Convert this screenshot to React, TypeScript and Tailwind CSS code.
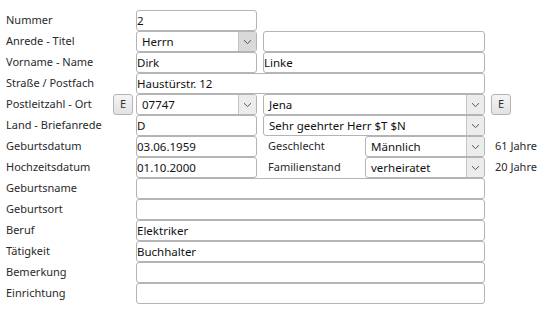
import React from 'react';

const font = { fontFamily: '"Noto Sans", "Open Sans", sans-serif' };

interface FieldProps {
  width: string;
  value?: string;
  select?: boolean;
  dark?: boolean;
}

const Chevron = () => (
  <svg width="9" height="6" viewBox="0 0 9 6" fill="none">
    <path d="M1 1.2 L4.5 4.6 L8 1.2" stroke="#555" strokeWidth="1" />
  </svg>
);

const Field: React.FC<FieldProps> = ({ width, value = '', select, dark }) => (
  <div
    className={`${width} h-[21px] flex items-stretch border border-[#b4b4b4] rounded-[3px] bg-white overflow-hidden`}
  >
    <span
      className={`flex-1 flex items-center text-[11.5px] text-[#111] whitespace-nowrap ${
        select ? 'pl-[5px] pt-[1px]' : 'pl-[0px]'
      }`}
    >
      {value}
    </span>
    {select && (
      <span
        className={`w-[18px] flex items-center justify-center border-l border-[#c4c4c4] ${
          dark ? 'bg-[#d9d9d9]' : 'bg-[#ececec]'
        }`}
      >
        <Chevron />
      </span>
    )}
  </div>
);

const EButton = () => (
  <div className="w-[20px] h-[21px] flex items-center justify-center border border-[#b4b4b4] rounded-[3px] bg-gradient-to-b from-[#f4f4f4] to-[#e2e2e2] text-[11px] text-[#333]">
    E
  </div>
);

const Row: React.FC<{ label: string; extra?: React.ReactNode; children: React.ReactNode }> = ({
  label,
  extra,
  children,
}) => (
  <div className="flex h-[21px] items-stretch">
    <div className="w-[136px] flex items-center justify-between pl-[6px] pr-[3px] text-[11px] text-[#2a2a2a]">
      <span>{label}</span>
      {extra}
    </div>
    <div className="flex items-stretch">{children}</div>
  </div>
);

export default function App() {
  return (
    <div className="w-[540px] h-[311px] bg-white pt-[10px]" style={font}>
      <Row label="Nummer">
        <Field width="w-[121px]" value="2" />
      </Row>
      <Row label="Anrede - Titel">
        <Field width="w-[121px]" value="Herrn" select dark />
        <div className="w-[6px]" />
        <Field width="w-[222px]" />
      </Row>
      <Row label="Vorname - Name">
        <Field width="w-[121px]" value="Dirk" />
        <div className="w-[6px]" />
        <Field width="w-[222px]" value="Linke" />
      </Row>
      <Row label="Straße / Postfach">
        <Field width="w-[349px]" value="Haustürstr. 12" />
      </Row>
      <Row label="Postleitzahl - Ort" extra={<EButton />}>
        <Field width="w-[121px]" value="07747" select />
        <div className="w-[6px]" />
        <Field width="w-[222px]" value="Jena" select />
        <div className="w-[6px]" />
        <EButton />
      </Row>
      <Row label="Land - Briefanrede">
        <Field width="w-[121px]" value="D" />
        <div className="w-[6px]" />
        <Field width="w-[222px]" value="Sehr geehrter Herr $T $N" select />
      </Row>
      <Row label="Geburtsdatum">
        <Field width="w-[121px]" value="03.06.1959" />
        <div className="w-[108px] flex items-center pl-[11px] text-[11px] text-[#2a2a2a]">Geschlecht</div>
        <Field width="w-[120px]" value="Männlich" select />
        <div className="flex items-center pl-[10px] text-[11px] text-[#2a2a2a] whitespace-nowrap">61 Jahre</div>
      </Row>
      <Row label="Hochzeitsdatum">
        <Field width="w-[121px]" value="01.10.2000" />
        <div className="w-[108px] flex items-center pl-[11px] text-[11px] text-[#2a2a2a]">Familienstand</div>
        <Field width="w-[120px]" value="verheiratet" select />
        <div className="flex items-center pl-[10px] text-[11px] text-[#2a2a2a] whitespace-nowrap">20 Jahre</div>
      </Row>
      <Row label="Geburtsname">
        <Field width="w-[349px]" />
      </Row>
      <Row label="Geburtsort">
        <Field width="w-[349px]" />
      </Row>
      <Row label="Beruf">
        <Field width="w-[349px]" value="Elektriker" />
      </Row>
      <Row label="Tätigkeit">
        <Field width="w-[349px]" value="Buchhalter" />
      </Row>
      <Row label="Bemerkung">
        <Field width="w-[349px]" />
      </Row>
      <Row label="Einrichtung">
        <Field width="w-[349px]" />
      </Row>
    </div>
  );
}
